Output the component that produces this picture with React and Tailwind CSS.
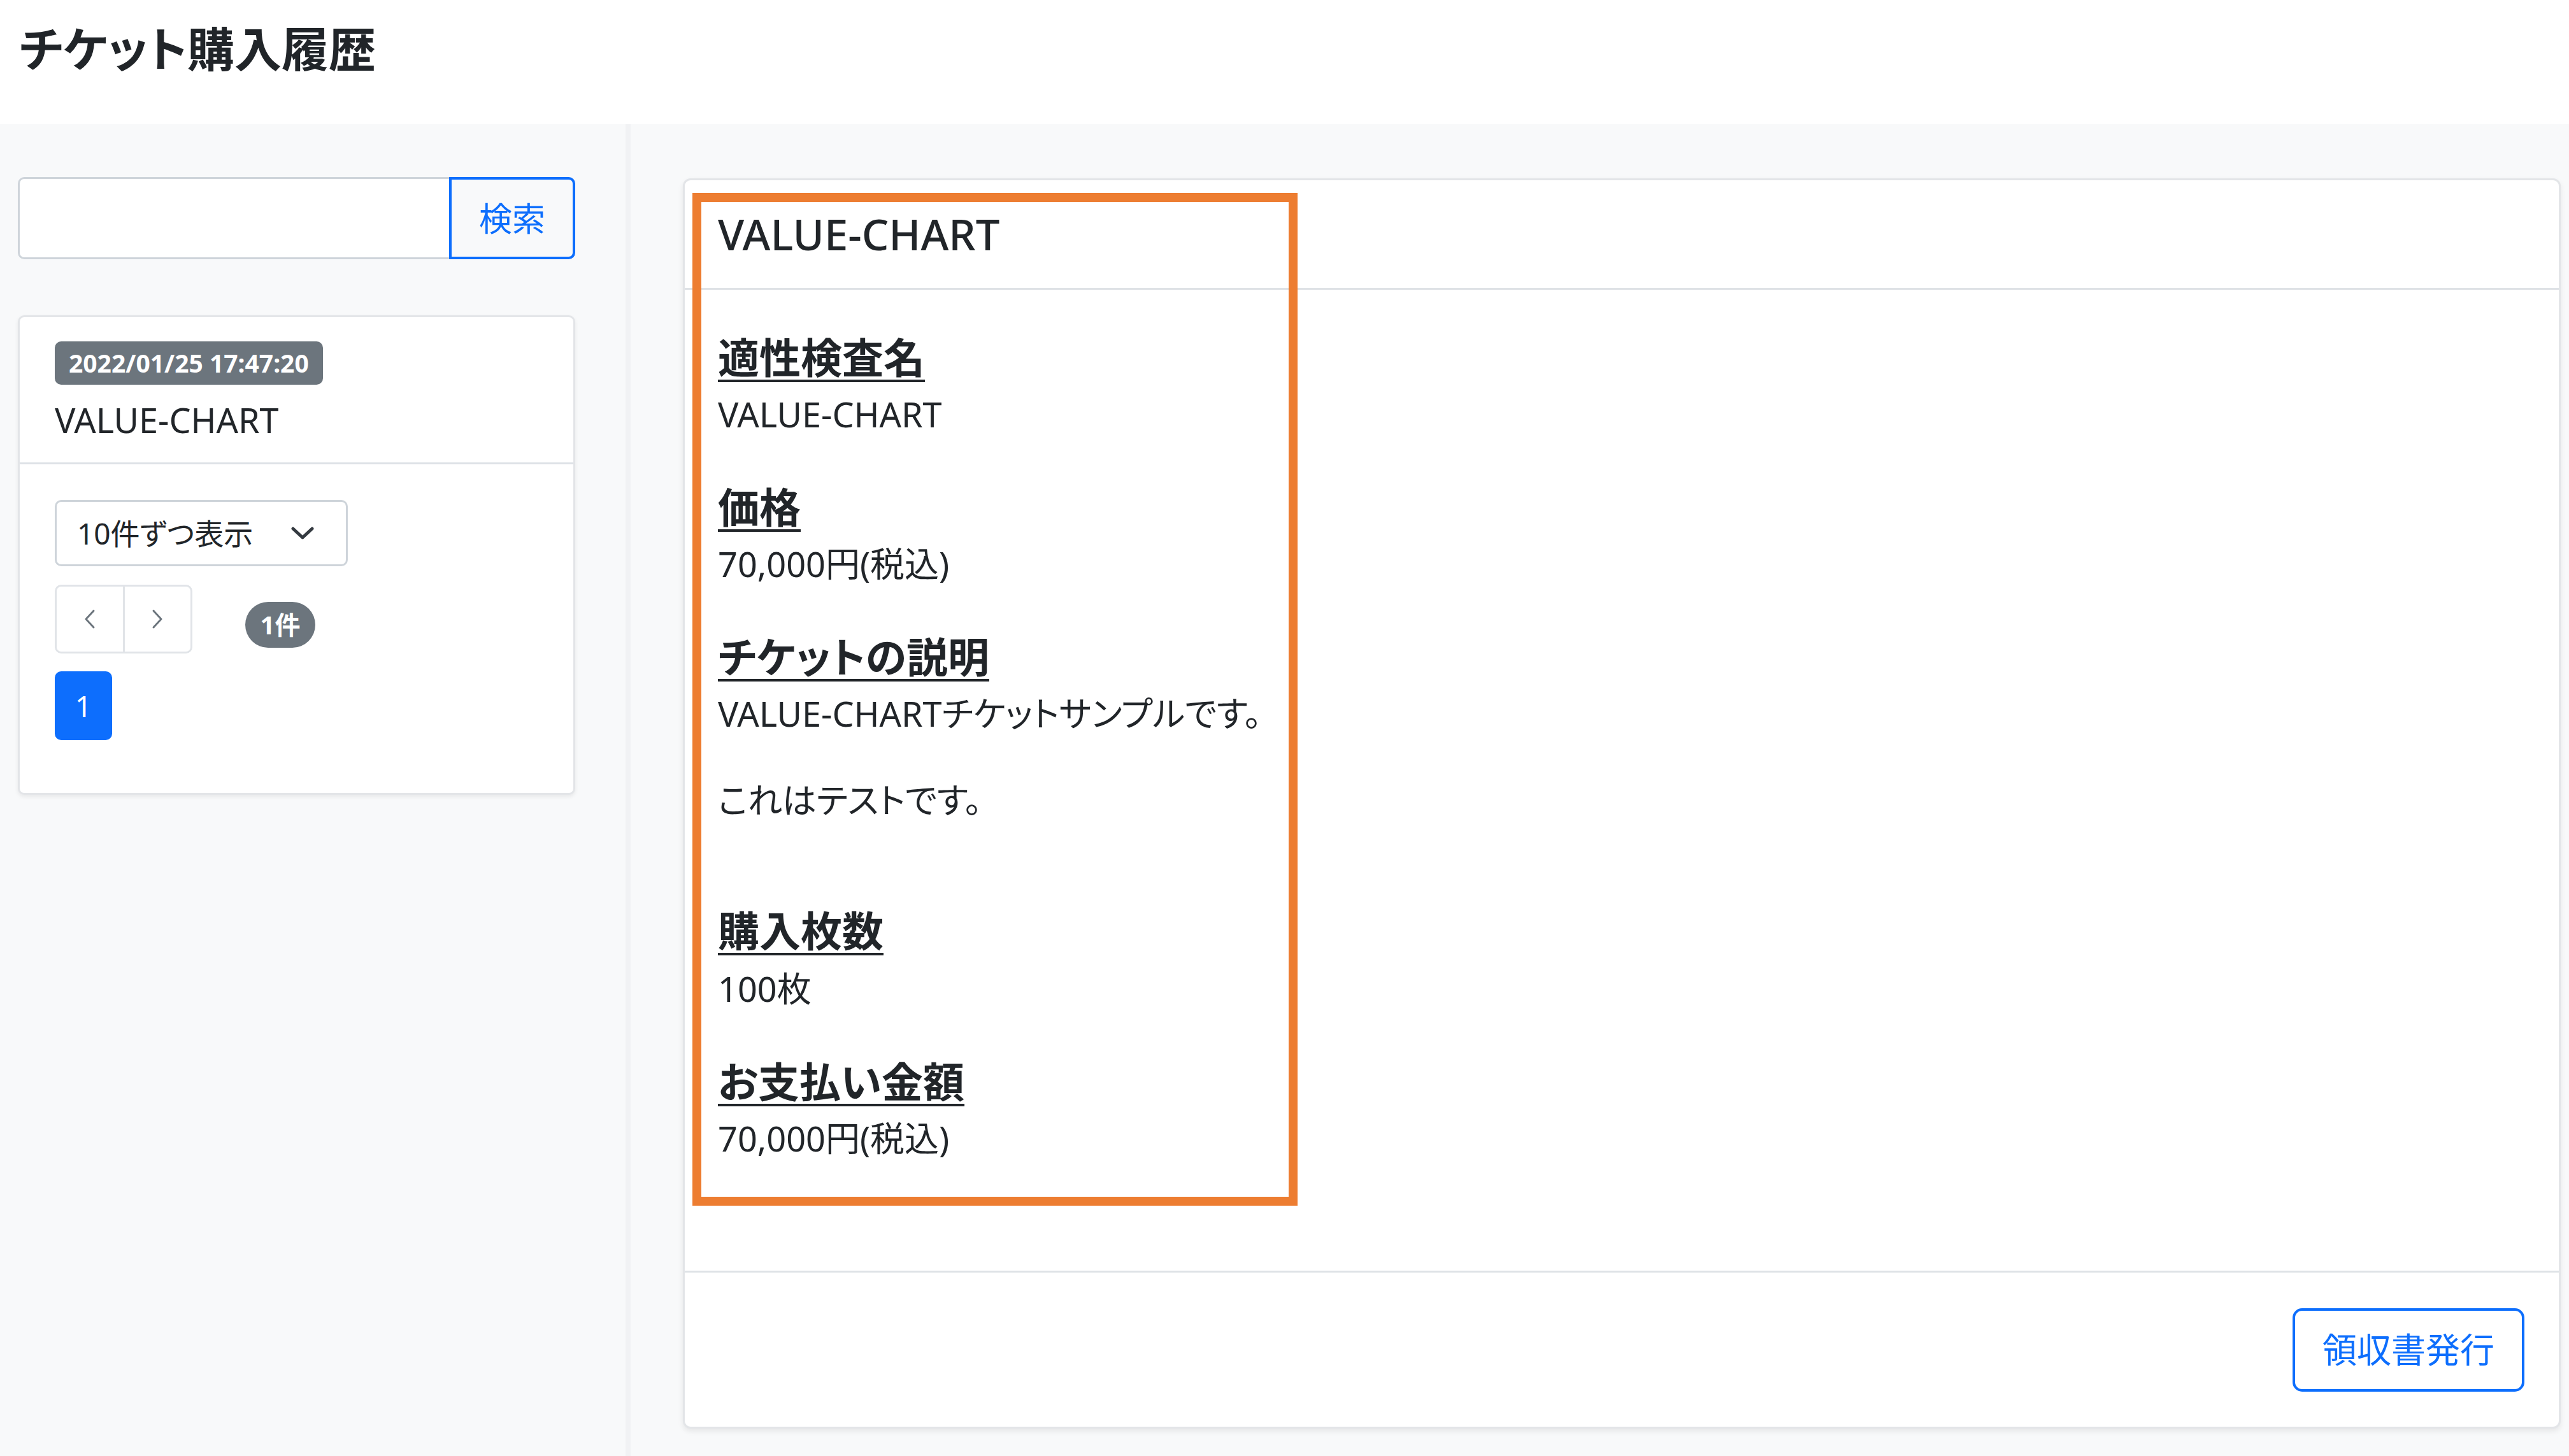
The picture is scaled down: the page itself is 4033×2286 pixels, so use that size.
import React from "react";

const Chevron = ({ dir }) => (
    <svg width="20" height="32" viewBox="0 0 20 32" fill="none">
        <path
            d={dir === "left" ? "M16 3 L4 16 L16 29" : "M4 3 L16 16 L4 29"}
            stroke="#6c757d"
            strokeWidth="3"
            strokeLinecap="round"
            strokeLinejoin="round"
        />
    </svg>
);

const Section = ({ title, first, children }) => (
    <div className={first ? "" : "mt-[66px]"}>
        <h5 className="text-[65px] font-bold leading-[80px] underline decoration-[4px] underline-offset-[10px]">
            {title}
        </h5>
        <div className="mt-[9px]">{children}</div>
    </div>
);

const App = () => {
    return (
        <div className="min-h-screen bg-[#f8f9fa] text-[#212529] font-['Noto_Sans','Noto_Sans_CJK_JP',sans-serif] [font-feature-settings:'palt']">
            {/* Header */}
            <header className="h-[195px] bg-white pl-[30px] pt-[40px]">
                <h1 className="text-[74px] font-bold leading-none">チケット購入履歴</h1>
            </header>

            <div className="flex min-h-[2091px]">
                {/* Sidebar */}
                <aside className="w-[990px] shrink-0 border-r-[8px] border-[#f1f2f4] pl-[28px] pt-[83px]">
                    <div className="flex h-[129px] w-[875px]">
                        <input
                            type="text"
                            className="min-w-0 flex-1 bg-white border-[3px] border-r-0 border-[#ced4da] rounded-l-[10px] outline-none px-4 text-[54px]"
                        />
                        <button className="w-[198px] shrink-0 border-[4px] border-[#0d6efd] rounded-r-[10px] text-[#0d6efd] text-[52px] leading-none">
                            検索
                        </button>
                    </div>

                    <div className="mt-[88px] w-[875px] bg-white border-[3px] border-[#e3e5e8] rounded-[10px] shadow-[0_3px_6px_rgba(0,0,0,0.07)]">
                        <div className="pl-[55px] pt-[38px] pb-[26px] border-b-[3px] border-[#dee2e6]">
                            <span className="inline-block bg-[#6c757d] text-white font-bold text-[39px] leading-[68px] px-[22px] rounded-[10px]">
                                2022/01/25 17:47:20
                            </span>
                            <p className="mt-[15px] text-[54px] leading-[81px]">VALUE-CHART</p>
                        </div>

                        <div className="pl-[55px] pt-[56px] pb-[83px]">
                            <div className="w-[460px] h-[104px] bg-white border-[3px] border-[#ced4da] rounded-[10px] flex items-center justify-between pl-[32px] pr-[50px]">
                                <span className="text-[46px]">10件ずつ表示</span>
                                <svg width="36" height="20" viewBox="0 0 36 20" fill="none">
                                    <path d="M3 3 L18 17 L33 3" stroke="#343a40" strokeWidth="5" strokeLinecap="round" strokeLinejoin="round" />
                                </svg>
                            </div>

                            <div className="mt-[29px] flex items-center">
                                <div className="flex h-[108px] w-[216px] border-[3px] border-[#e1e4e8] rounded-[10px] overflow-hidden">
                                    <button className="flex-1 flex items-center justify-center border-r-[3px] border-[#e1e4e8]">
                                        <Chevron dir="left" />
                                    </button>
                                    <button className="flex-1 flex items-center justify-center">
                                        <Chevron dir="right" />
                                    </button>
                                </div>
                                <span className="ml-[83px] mt-[18px] h-[72px] w-[110px] rounded-full bg-[#6c757d] text-white font-bold text-[40px] flex items-center justify-center">
                                    1件
                                </span>
                            </div>

                            <button className="mt-[28px] w-[90px] h-[108px] bg-[#0d6efd] rounded-[10px] text-white text-[46px] flex items-center justify-center">
                                1
                            </button>
                        </div>
                    </div>
                </aside>

                {/* Main */}
                <main className="flex-1 pl-[82px] pt-[85px] pr-[13px]">
                    <div className="relative h-[1963px] flex flex-col bg-white border-[3px] border-[#e3e5e8] rounded-[12px] shadow-[0_4px_8px_rgba(0,0,0,0.08)]">
                        <div className="h-[172px] flex items-center px-[52px] border-b-[3px] border-[#dee2e6]">
                            <h5 className="text-[67px] font-medium leading-none">VALUE-CHART</h5>
                        </div>

                        <div className="flex-1 px-[52px] pt-[66px]">
                            <Section title="適性検査名" first>
                                <p className="text-[54px] leading-[80px]">VALUE-CHART</p>
                            </Section>
                            <Section title="価格">
                                <p className="text-[54px] leading-[80px]">70,000円(税込)</p>
                            </Section>
                            <Section title="チケットの説明">
                                <p className="text-[54px] leading-[80px]">VALUE-CHARTチケットサンプルです。</p>
                                <p className="mt-[56px] text-[54px] leading-[80px]">これはテストです。</p>
                            </Section>
                            <div className="mt-[125px]">
                                <h5 className="text-[65px] font-bold leading-[80px] underline decoration-[4px] underline-offset-[10px]">購入枚数</h5>
                                <p className="mt-[11px] text-[54px] leading-[80px]">100枚</p>
                            </div>
                            <Section title="お支払い金額">
                                <p className="text-[54px] leading-[80px]">70,000円(税込)</p>
                            </Section>
                        </div>

                        <div className="h-[245px] flex items-center justify-end pr-[54px] border-t-[3px] border-[#dee2e6]">
                            <button className="w-[364px] h-[131px] border-[4px] border-[#0d6efd] rounded-[15px] text-[#0d6efd] text-[54px] leading-none">
                                領収書発行
                            </button>
                        </div>

                        {/* orange highlight */}
                        <div className="absolute left-[12px] top-[20px] w-[950px] h-[1590px] border-[14px] border-[#ed7d31] pointer-events-none" />
                    </div>
                </main>
            </div>
        </div>
    );
};

export default App;
